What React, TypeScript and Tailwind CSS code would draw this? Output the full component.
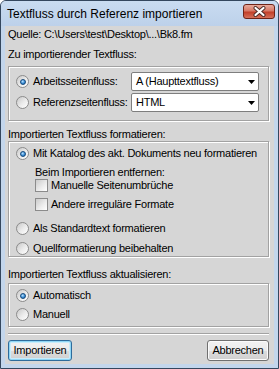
import React from 'react';

function Radio({ checked }: { checked?: boolean }) {
  return (
    <span className="flex h-[13px] w-[13px] shrink-0 items-center justify-center rounded-full border border-[#8b8b8b] bg-[linear-gradient(135deg,#c8c8c8,#ececec_55%,#ffffff)]">
      {checked && (
        <span className="h-[6px] w-[6px] rounded-full border border-[#174a7c] bg-[radial-gradient(circle_at_40%_35%,#b9e2ff,#3a8fd8_55%,#1a5aa0)]" />
      )}
    </span>
  );
}

function Check() {
  return (
    <span className="h-[13px] w-[13px] shrink-0 border border-[#8b8b8b] bg-[linear-gradient(135deg,#cbcbcb,#ededed_60%,#ffffff)]" />
  );
}

function Combo({ value }: { value: string }) {
  return (
    <div className="flex h-[19px] w-[128px] shrink-0 items-center justify-between rounded-[2px] border border-[#7e7e7e] bg-white pl-[4px] pr-[3px]">
      <span>{value}</span>
      <svg width="7" height="4" viewBox="0 0 7 4">
        <path d="M0 0H7L3.5 4Z" fill="#000" />
      </svg>
    </div>
  );
}

function Group({ className, children }: { className: string; children: React.ReactNode }) {
  return (
    <div className={`border border-[#a2a2a2] shadow-[inset_1px_1px_0_#ffffff,1px_1px_0_#ffffff] ${className}`}>
      {children}
    </div>
  );
}

function RadioRow({ label, checked, className = '' }: { label: string; checked?: boolean; className?: string }) {
  return (
    <div className={`flex h-[13px] items-center gap-[4px] pl-[7px] ${className}`}>
      <Radio checked={checked} />
      <span>{label}</span>
    </div>
  );
}

function CheckRow({ label, className = '' }: { label: string; className?: string }) {
  return (
    <div className={`flex h-[13px] items-center gap-[3px] pl-[26px] ${className}`}>
      <Check />
      <span>{label}</span>
    </div>
  );
}

export default function App() {
  return (
    <div className="h-[369px] w-[279px] bg-white font-['Liberation_Sans',Arial,sans-serif] text-black">
      <div className="flex h-full flex-col rounded-t-[6px] border border-[#34475e] bg-[#c3d6ec]">
        {/* title bar */}
        <div className="flex h-[25px] shrink-0 items-start justify-between rounded-t-[5px] bg-[linear-gradient(#c9dcf1,#bdd1ea)] pl-[6px] pr-[3px]">
          <span className="mt-[6px] text-[12px] leading-[15px]">Textfluss durch Referenz importieren</span>
          <div className="mt-[3px] flex h-[15px] w-[32px] items-center justify-center rounded-[3px] border border-[#6e2418] bg-[linear-gradient(#e8aa9c,#d77966_45%,#c2402a_55%,#d5705a)]">
            <svg width="13" height="11" viewBox="0 0 13 11">
              <path d="M2.5 2L10.5 9M10.5 2L2.5 9" stroke="#4a2a26" strokeWidth="4" strokeLinecap="round" />
              <path d="M2.5 2L10.5 9M10.5 2L2.5 9" stroke="#ffffff" strokeWidth="2.2" strokeLinecap="round" />
            </svg>
          </div>
        </div>

        {/* body */}
        <div className="mx-[4px] mb-[4px] flex flex-1 flex-col whitespace-nowrap bg-[#d6d6d6] pl-[3px] pr-[5px] pt-[2px] text-[11px] leading-[13px] tracking-[-0.25px]">
          <div className="h-[13px]">Quelle: C:\Users\test\Desktop\...\Bk8.fm</div>

          <div className="mt-[7px] h-[13px]">Zu importierender Textfluss:</div>
          <Group className="mt-[5px] flex flex-col gap-[2px] pb-[8px] pt-[5px]">
            <div className="flex h-[19px] items-center pl-[7px]">
              <Radio checked />
              <span className="ml-[4px] w-[98px]">Arbeitsseitenfluss:</span>
              <Combo value="A (Haupttextfluss)" />
            </div>
            <div className="flex h-[19px] items-center pl-[7px]">
              <Radio />
              <span className="ml-[4px] w-[98px]">Referenzseitenfluss:</span>
              <Combo value="HTML" />
            </div>
          </Group>

          <div className="mt-[7px] h-[13px]">Importierten Textfluss formatieren:</div>
          <Group className="pb-[1px] pt-[5px]">
            <RadioRow checked label="Mit Katalog des akt. Dokuments neu formatieren" />
            <div className="mt-[6px] h-[13px] pl-[26px]">Beim Importieren entfernen:</div>
            <CheckRow label="Manuelle Seitenumbrüche" />
            <CheckRow className="mt-[6px]" label="Andere irreguläre Formate" />
            <RadioRow className="mt-[11px]" label="Als Standardtext formatieren" />
            <RadioRow className="mt-[7px]" label="Quellformatierung beibehalten" />
          </Group>

          <div className="mt-[11px] h-[13px]">Importierten Textfluss aktualisieren:</div>
          <Group className="mt-[2px] pb-[5px] pt-[5px]">
            <RadioRow checked label="Automatisch" />
            <RadioRow className="mt-[6px]" label="Manuell" />
          </Group>

          <div className="mt-[6px] h-[1px] bg-[#a2a2a2] shadow-[0_1px_0_#ffffff]" />

          <div className="mt-[6px] flex justify-between">
            <button className="h-[21px] w-[64px] rounded-[3px] border border-[#2e6c9c] bg-[linear-gradient(#f2f2f2,#ebebeb_50%,#dddddd_50%,#cfcfcf)] text-[11px] shadow-[inset_0_0_0_1px_#8fd6f5,inset_0_0_0_2px_#c8ecfb]">
              Importieren
            </button>
            <button className="h-[21px] w-[62px] rounded-[3px] border border-[#707070] bg-[linear-gradient(#f2f2f2,#ebebeb_50%,#dddddd_50%,#cfcfcf)] text-[11px] shadow-[inset_0_0_0_1px_#fbfbfb]">
              Abbrechen
            </button>
          </div>
        </div>
      </div>
    </div>
  );
}
